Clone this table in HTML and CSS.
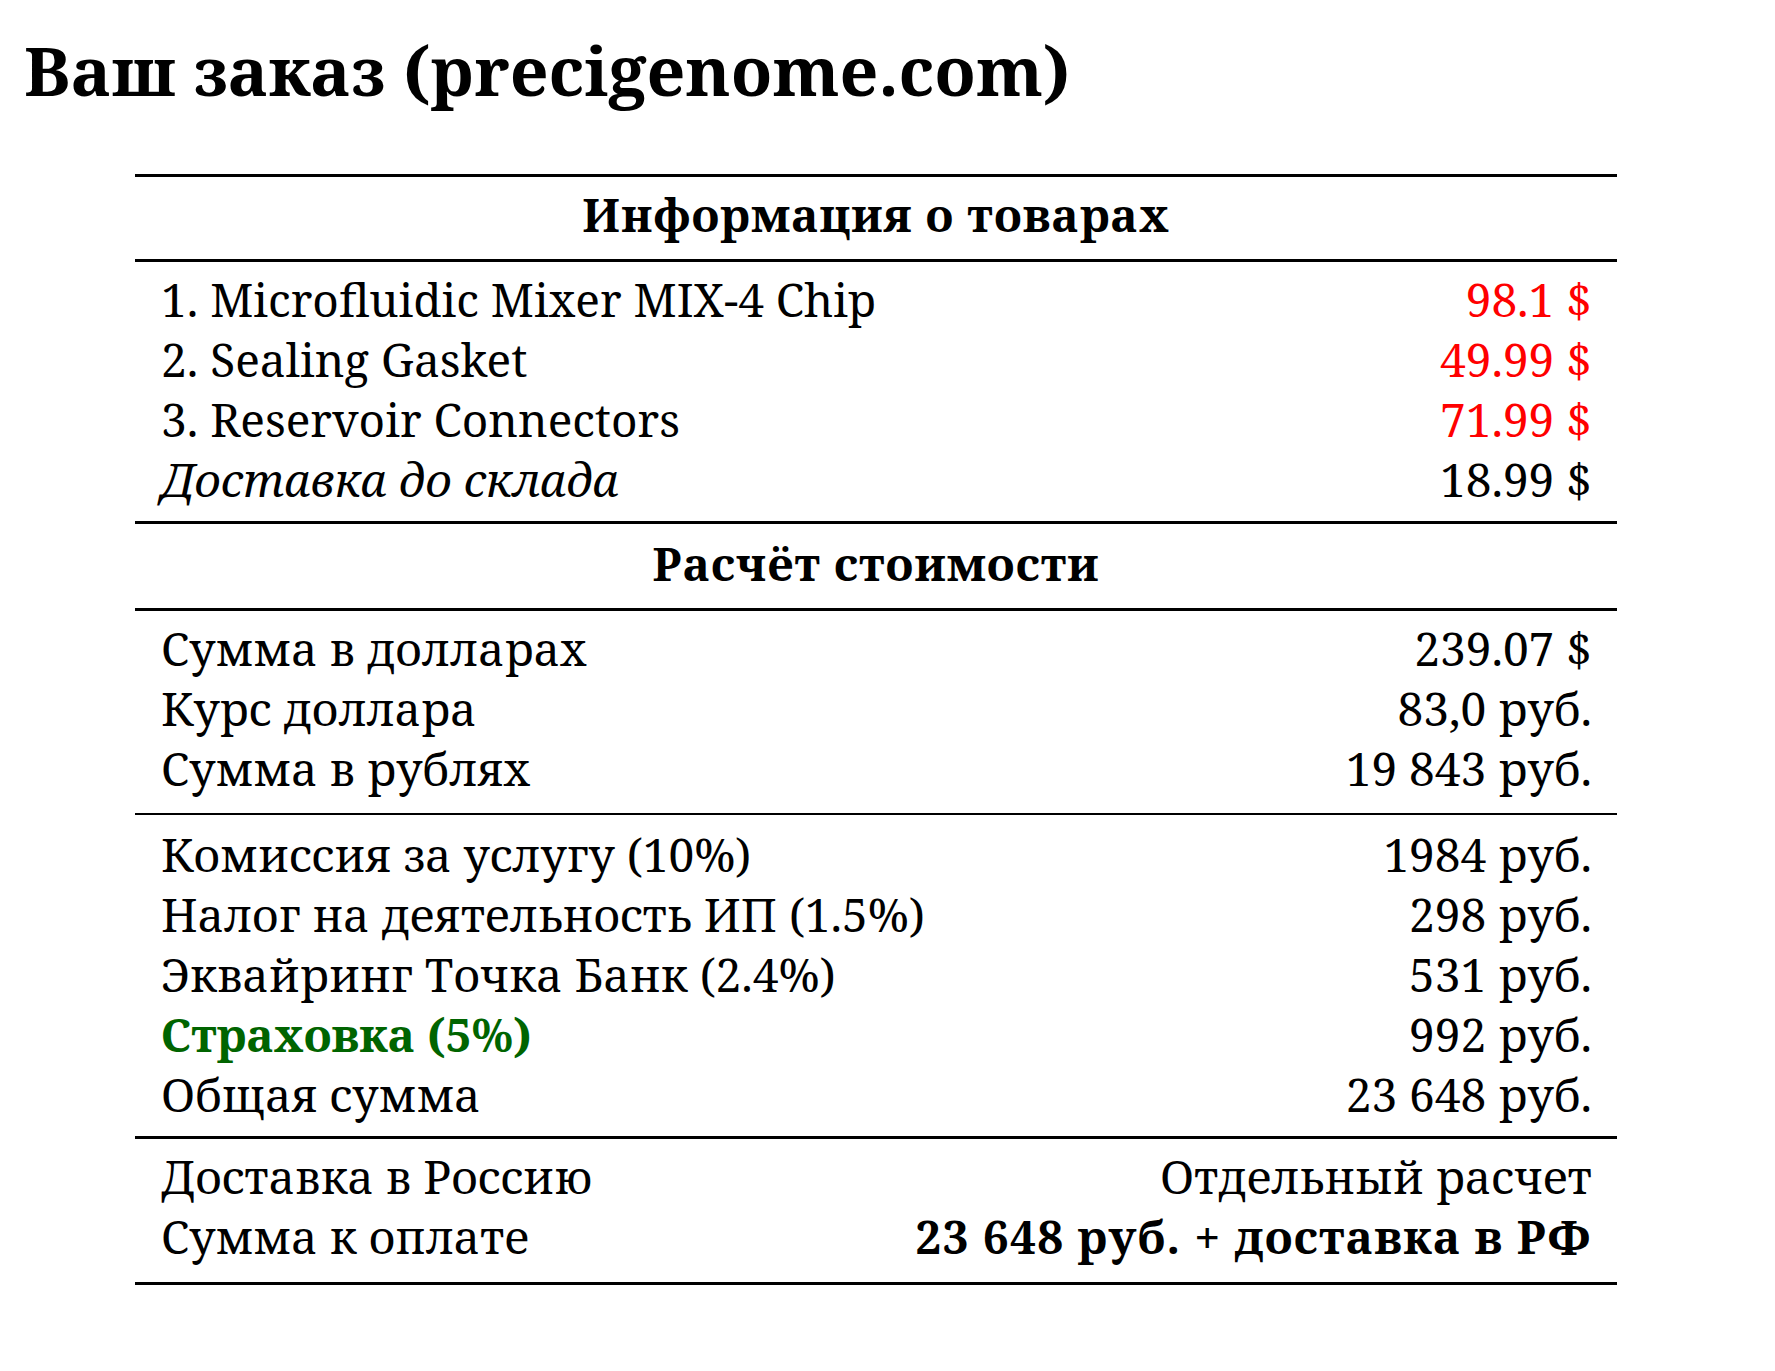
FILE: index.html
```html
<!DOCTYPE html>
<html lang="ru">
<head>
<meta charset="utf-8">
<title>Ваш заказ (precigenome.com)</title>
<link rel="stylesheet" href="styles.css">
</head>
<body>
<h1 class="title">Ваш заказ (precigenome.com)</h1>
<div class="order">
  <div class="section-head">Информация о товарах</div>
  <div class="group group-items">
    <div class="row"><span>1. Microfluidic Mixer MIX-4 Chip</span><span class="red">98.1 $</span></div>
    <div class="row"><span>2. Sealing Gasket</span><span class="red">49.99 $</span></div>
    <div class="row"><span>3. Reservoir Connectors</span><span class="red">71.99 $</span></div>
    <div class="row"><span class="ital">Доставка до склада</span><span>18.99 $</span></div>
  </div>
  <div class="section-head section-head-calc">Расчёт стоимости</div>
  <div class="group group-thin">
    <div class="row"><span>Сумма в долларах</span><span>239.07 $</span></div>
    <div class="row"><span>Курс доллара</span><span>83,0 руб.</span></div>
    <div class="row"><span>Сумма в рублях</span><span>19 843 руб.</span></div>
  </div>
  <div class="group group-fees">
    <div class="row"><span>Комиссия за услугу (10%)</span><span>1984 руб.</span></div>
    <div class="row"><span>Налог на деятельность ИП (1.5%)</span><span>298 руб.</span></div>
    <div class="row"><span>Эквайринг Точка Банк (2.4%)</span><span>531 руб.</span></div>
    <div class="row"><span class="green">Страховка (5%)</span><span>992 руб.</span></div>
    <div class="row"><span>Общая сумма</span><span>23 648 руб.</span></div>
  </div>
  <div class="group group-last">
    <div class="row"><span>Доставка в Россию</span><span>Отдельный расчет</span></div>
    <div class="row"><span>Сумма к оплате</span><span class="strong">23 648 руб. + доставка в РФ</span></div>
  </div>
</div>
</body>
</html>
```
FILE: styles.css
```css
html, body {
  margin: 0;
  padding: 0;
  background: #ffffff;
}

body {
  font-family: "Noto Serif", "DejaVu Serif", serif;
  color: #000000;
}

.title {
  margin: 0;
  padding: 22px 0 0 24px;
  font-size: 68px;
  line-height: 96px;
  font-weight: 700;
}

.order {
  margin: 56px 0 0 135px;
  width: 1482px;
  border-top: 3px solid #000;
  font-size: 46px;
  line-height: 60px;
}

.section-head {
  text-align: center;
  font-weight: 700;
  letter-spacing: 1px;
  padding: 7px 0 15px;
  border-bottom: 3px solid #000;
}

.section-head-calc {
  padding: 9px 0 15px;
}

.group {
  padding: 7px 25px 12px 26px;
  border-bottom: 3px solid #000;
}

.group-thin {
  padding-bottom: 15px;
  border-bottom-width: 2px;
}

.group-fees {
  padding-top: 9px;
}

.group-last {
  padding-bottom: 16px;
}

.row {
  display: flex;
  justify-content: space-between;
  white-space: nowrap;
}

.red {
  color: #ff0000;
}

.green {
  color: #006400;
  font-weight: 700;
}

.ital {
  font-style: italic;
}

.strong {
  font-weight: 700;
  letter-spacing: 1.2px;
}
```
